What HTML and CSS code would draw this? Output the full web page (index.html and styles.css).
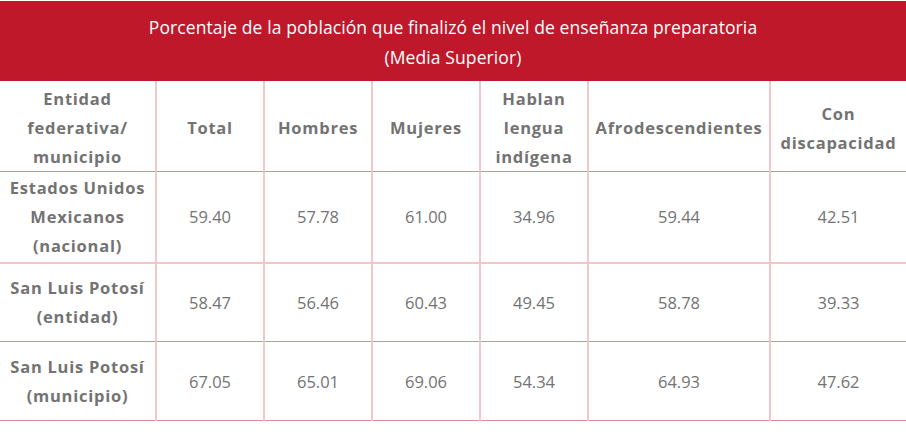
FILE: index.html
```html
<!DOCTYPE html>
<html lang="es">
<head>
<meta charset="utf-8">
<link rel="stylesheet" href="styles.css">
</head>
<body>
<div class="wrap">
  <div class="title">Porcentaje de la población que finalizó el nivel de enseñanza preparatoria<br>(Media Superior)</div>
  <table class="data">
    <colgroup>
      <col class="c1"><col class="c2"><col class="c2"><col class="c2"><col class="c2"><col class="c6"><col class="c7">
    </colgroup>
    <thead>
      <tr class="head">
        <th>Entidad<br>federativa/<br>municipio</th>
        <th>Total</th>
        <th>Hombres</th>
        <th>Mujeres</th>
        <th>Hablan<br>lengua<br>indígena</th>
        <th>Afrodescendientes</th>
        <th>Con<br>discapacidad</th>
      </tr>
    </thead>
    <tbody>
      <tr class="r1">
        <th>Estados Unidos<br>Mexicanos<br>(nacional)</th>
        <td>59.40</td><td>57.78</td><td>61.00</td><td>34.96</td><td>59.44</td><td>42.51</td>
      </tr>
      <tr class="r2">
        <th>San Luis Potosí<br>(entidad)</th>
        <td>58.47</td><td>56.46</td><td>60.43</td><td>49.45</td><td>58.78</td><td>39.33</td>
      </tr>
      <tr class="r3">
        <th>San Luis Potosí<br>(municipio)</th>
        <td>67.05</td><td>65.01</td><td>69.06</td><td>54.34</td><td>64.93</td><td>47.62</td>
      </tr>
    </tbody>
  </table>
</div>
</body>
</html>
```
FILE: styles.css
```css
html, body {
  margin: 0;
  padding: 0;
  background: #ffffff;
}
.wrap {
  width: 906px;
  padding-top: 1px;
  font-family: "Open Sans", "Liberation Sans", sans-serif;
}
.title {
  background: #c0182b;
  color: #ffffff;
  text-align: center;
  font-size: 17.5px;
  font-weight: 500;
  line-height: 30px;
  height: 80px;
  box-sizing: border-box;
  padding-top: 11px;
  letter-spacing: 0.1px;
}
.data {
  width: 906px;
  table-layout: fixed;
  border-collapse: collapse;
  color: #737373;
}
.c1 { width: 156px; }
.c2 { width: 108px; }
.c6 { width: 182px; }
.c7 { width: 136px; }
.data th, .data td {
  text-align: center;
  vertical-align: middle;
  padding: 0;
  border-left: 2px solid #f2c6ca;
  border-right: 2px solid #f2c6ca;
}
.data tr > :first-child { border-left: none; }
.data tr > :last-child { border-right: none; }
.data th {
  font-weight: 700;
  font-size: 16.5px;
  line-height: 29px;
  letter-spacing: 0.75px;
}
.head th { padding-top: 3px; }
.data td {
  font-size: 16.5px;
  font-weight: 400;
}
.head { height: 90px; }
.head th { border-bottom: 1px solid #dc8a93; }
.r1 { height: 91px; }
.r1 > * { border-bottom: 2px solid #f2c3c7; }
.r2 { height: 79px; }
.r2 > * { border-bottom: 1px solid #dc8a93; }
.r3 { height: 79px; }
.r3 > * { border-bottom: 1px solid #dc8a93; }
```
